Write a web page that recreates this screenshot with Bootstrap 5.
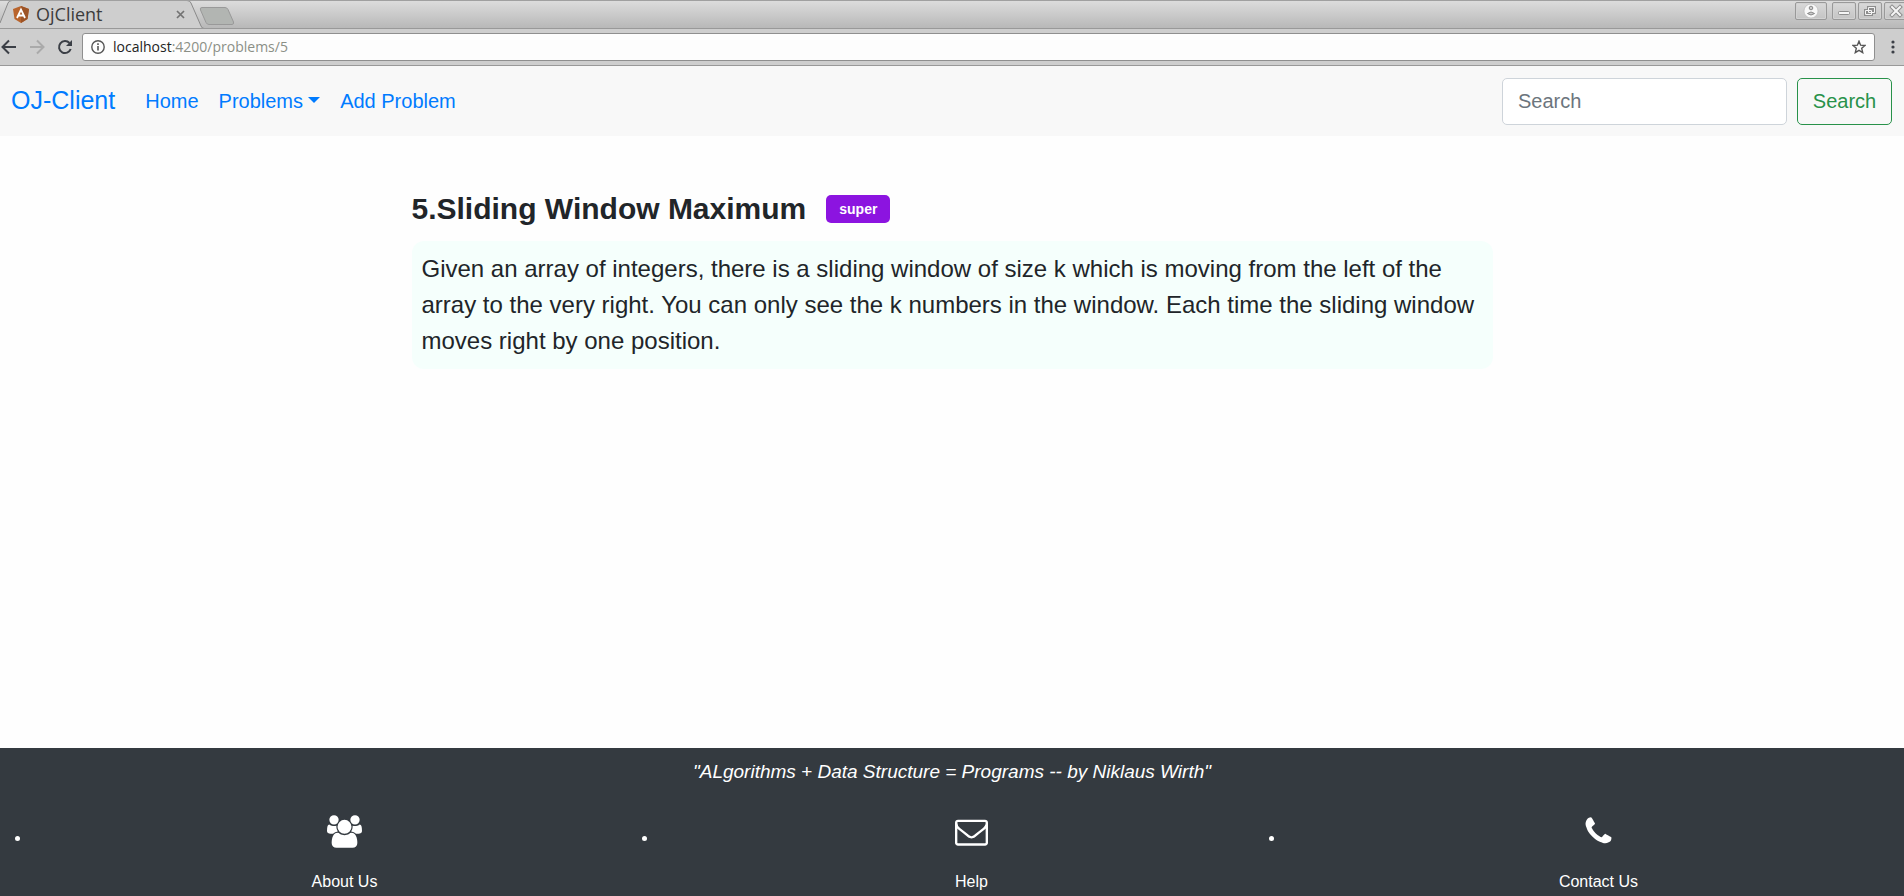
<!DOCTYPE html>
<html lang="en">
<head>
<meta charset="utf-8">
<meta name="viewport" content="width=device-width, initial-scale=1">
<title>OjClient</title>
<link href="https://cdn.jsdelivr.net/npm/bootstrap@5.3.0/dist/css/bootstrap.min.css" rel="stylesheet">
<style>
  body { font-family: "Liberation Sans", Arial, sans-serif; background: #fefefe; color: #212529; }
  .browser { font-family: "Open Sans", "Noto Sans", sans-serif; }
  .browser button { background: none; border: 0; padding: 0; line-height: 0; }
  .tab-strip { height: 29px; background: linear-gradient(#dcdcdc, #b8b8b8); border-top: 1px solid #a0a0a0; border-bottom: 1px solid #999; overflow: hidden; }
  .tab-shape { width: 202px; height: 29px; margin-top: -1px; position: relative; }
  .tab-shape > svg { position: absolute; left: 0; top: 0; }
  .tab-label { position: relative; height: 28px; padding-left: 13px; padding-right: 17px; }
  .tab-label a { font-size: 18px; line-height: 28px; color: #3c3c3c; margin-left: 7px; }
  .new-tab { margin-left: -3px; }
  .win-group { gap: 2px; margin: 1px -4px 0 auto; }
  .browser .win-btn { height: 18px; width: 24px; border: 1px solid #999; border-radius: 2px; box-shadow: inset 0 0 0 1px #d2d2d2; }
  .browser .win-btn.profile { width: 32px; margin-right: 3px; }
  .tool-row { height: 37px; background: #cecece; border-bottom: 1px solid #999; }
  .address { height: 28px; border: 1px solid #8f8f8f; border-radius: 3px; background: #fdfdfd; font-size: 14px; line-height: 26px; color: #8b8f86; }
  .address a { color: inherit; }
  .address b { font-weight: 400; color: #222; }
  .tool-row .menu-btn { padding: 0 9px 0 16px; }
  .site-nav { background: #f8f8f8; min-height: 70px; --bs-navbar-padding-y: 0; font-size: 20px; }
  .site-nav .container-fluid { padding-left: 11px; }
  .site-nav a { color: #007bff; }
  .site-nav .navbar-brand { font-size: 25px; margin-right: 20px; }
  .site-nav .navbar-nav .nav-link { padding: 8px 10px; color: #007bff; }
  .site-nav form { gap: 10px; }
  .site-nav .form-control { width: 285px; height: 47px; font-size: 20px; padding: 6px 15px; border-color: #ced4da; border-radius: 5px; background: #fff; }
  .site-nav .form-control::placeholder { color: #6c757d; }
  .site-nav .btn { width: 95px; height: 47px; font-size: 20px; padding: 6px 0; color: #28924a; border-color: #28924a; border-radius: 5px; }
  .problem { max-width: 1081px; padding: 54px 0 0; }
  .title-row { gap: 20px; margin-bottom: 13px; }
  .problem h1 { font-size: 30px; line-height: 38px; }
  .level { background: #8c14e0; font-size: 14px; line-height: 14px; padding: 7px 13px; border-radius: 5px; }
  .statement { background: #f5fffc; border-radius: 12px; padding: 10px; font-size: 24px; line-height: 36px; }
  .site-footer { background: #343a40; color: #fff; min-height: 148px; overflow: hidden; }
  .site-footer .quote { font-size: 19px; line-height: 28px; padding-top: 10px; }
  .site-footer ul { margin: 0 -8px 0 31px; padding: 29px 0 0; }
  .site-footer li { text-align: center; font-size: 16px; line-height: 24px; }
  .site-footer li a { color: #fff; }
  .site-footer li svg { vertical-align: -5px; }
  .site-footer li span { display: block; padding-top: 20px; }
</style>
</head>
<body class="min-vh-100 d-flex flex-column">
<div class="browser">
  <div class="tab-strip d-flex align-items-start">
    <div class="tab-shape">
      <svg width="204" height="29"><path d="M-2 28 L8 3 Q9 .5 12 .5 H187 Q190 .5 191 3 L201 26 Q202 28.500 204 28.500 V30 H-2Z" fill="#cecece"/><path d="M0 23 L8 3 Q9 .5 12 .5 H187 Q190 .5 191 3 L201 26 Q202 28.500 204 28.500" fill="none" stroke="#8a8a8a"/></svg>
      <div class="tab-label d-flex align-items-center">
        <svg width="16" height="17" viewBox="0 0 16 17"><path d="M8 0 16 3 14.500 13 8 17 1.500 13 0 3Z" fill="#b9642c"/><path d="M8 0 16 3 14.500 13 8 17Z" fill="#9d5426"/><path d="M4 12 8 3.500 12 12M5.500 9.500H10.500" fill="none" stroke="#fff" stroke-width="1.800"/></svg>
        <a href="#" class="text-decoration-none me-auto">OjClient</a>
        <button type="button" aria-label="Close tab"><svg width="9" height="9"><path d="M1 1 8 8M8 1 1 8" stroke="#737373" stroke-width="1.700"/></svg></button>
      </div>
    </div>
    <button type="button" class="new-tab" aria-label="New tab"><svg width="36" height="26"><path d="M3 6.500H26Q28 6.500 29 8.500L34.500 21Q35 23.500 33 23.500H10Q8 23.500 7 21.500L1.500 9Q.5 6.500 3 6.500Z" fill="#b2b5b2" stroke="#999"/></svg></button>
    <div class="win-group d-flex">
      <button type="button" class="win-btn profile" aria-label="Profile"><svg width="16" height="16" viewBox="0 0 16 16"><circle cx="8" cy="8" r="7" fill="#f8f8f8" stroke="#aaa" stroke-width=".5"/><circle cx="8" cy="5" r="1.800" fill="#ccc" stroke="#888"/><path d="M4.500 10.500Q8 7.500 11.500 10.500 8 13.500 4.500 10.500Z" fill="#ccc" stroke="#888"/></svg></button>
      <button type="button" class="win-btn" aria-label="Minimise"><svg width="16" height="16"><rect x="2.500" y="8.500" width="11" height="3" rx="1" fill="#f5f5f5" stroke="#8d8d8d"/></svg></button>
      <button type="button" class="win-btn" aria-label="Restore"><svg width="16" height="16"><path d="M6.500 4.500h6v5h-6zM3.500 7.500h6v4h-6z" fill="none" stroke="#8d8d8d" stroke-width="3"/><path d="M6.500 4.500h6v5h-6zM3.500 7.500h6v4h-6z" fill="none" stroke="#f5f5f5"/></svg></button>
      <button type="button" class="win-btn" aria-label="Close"><svg width="16" height="16"><path d="M4 4 12 12M12 4 4 12" stroke="#8d8d8d" stroke-width="4" stroke-linecap="square"/><path d="M4 4 12 12M12 4 4 12" stroke="#f5f5f5" stroke-width="2" stroke-linecap="square"/></svg></button>
    </div>
  </div>
  <div class="tool-row d-flex align-items-center">
    <button type="button" aria-label="Back"><svg width="18" height="16"><path d="M16 8H3M9 1.500 2.500 8 9 14.500" fill="none" stroke="#3b3f46" stroke-width="2"/></svg></button>
    <button type="button" class="ms-2 ps-1" aria-label="Forward"><svg width="18" height="16"><path d="M0 8H13M7 1.500 13.500 8 7 14.500" fill="none" stroke="#aaa" stroke-width="2"/></svg></button>
    <button type="button" class="ms-2" aria-label="Reload"><svg width="18" height="16"><path d="M13.500 4A6 6 0 1 0 14.700 10" fill="none" stroke="#3b3f46" stroke-width="2"/><path d="M16 1V7H10Z" fill="#3b3f46"/></svg></button>
    <div class="address flex-grow-1 d-flex align-items-center ms-2 ps-1 pe-2">
      <svg class="ms-1 me-2" width="14" height="14" viewBox="0 0 14 14"><circle cx="7" cy="7" r="6.200" fill="none" stroke="#555" stroke-width="1.400"/><path d="M7 6V10.500M7 3.200V5" stroke="#555" stroke-width="1.600"/></svg>
      <a href="#" class="text-decoration-none me-auto"><b>localhost</b>:4200/problems/5</a>
      <button type="button" aria-label="Bookmark"><svg width="14" height="14" viewBox="0 0 14 14"><path d="M7 1.200 8.600 5.200 13 5.500 9.700 8.300 10.700 12.600 7 10.300 3.300 12.600 4.300 8.300 1 5.500 5.400 5.200Z" fill="none" stroke="#555" stroke-width="1.400"/></svg></button>
    </div>
    <button type="button" class="menu-btn" aria-label="Menu"><svg width="4" height="14"><circle cx="2" cy="2" r="1.600" fill="#3b3f46"/><circle cx="2" cy="7" r="1.600" fill="#3b3f46"/><circle cx="2" cy="12" r="1.600" fill="#3b3f46"/></svg></button>
  </div>
</div>

<nav class="site-nav navbar navbar-expand">
  <div class="container-fluid">
    <a class="navbar-brand" href="#">OJ-Client</a>
    <ul class="navbar-nav me-auto">
      <li class="nav-item"><a class="nav-link" href="#">Home</a></li>
      <li class="nav-item dropdown"><a class="nav-link dropdown-toggle" href="#" role="button" data-bs-toggle="dropdown">Problems</a></li>
      <li class="nav-item"><a class="nav-link" href="#">Add Problem</a></li>
    </ul>
    <form class="d-flex" role="search">
      <input class="form-control" type="search" placeholder="Search" aria-label="Search">
      <button class="btn btn-outline-success" type="button">Search</button>
    </form>
  </div>
</nav>

<main class="problem container flex-grow-1">
  <div class="title-row d-flex align-items-center">
    <h1 class="fw-bold mb-0">5.Sliding Window Maximum</h1>
    <span class="level badge">super</span>
  </div>
  <p class="statement mb-0">Given an array of integers, there is a sliding window of size k which is moving from the left of the array to the very right. You can only see the k numbers in the window. Each time the sliding window moves right by one position.</p>
</main>

<footer class="site-footer">
  <p class="quote fst-italic text-center mb-0">"ALgorithms + Data Structure = Programs -- by Niklaus Wirth"</p>
  <ul class="d-flex">
    <li class="col-4"><a href="#" class="text-decoration-none">
      <svg width="35" height="33" viewBox="0 0 1920 1792" fill="#fff"><path d="M593 896q-162 5-265 128h-134q-82 0-138-40.500t-56-118.500q0-353 124-353 6 0 43.500 21t97.500 42.500 119 21.500q67 0 133-23-5 37-5 66 0 139 81 256zm1071 637q0 120-73 189.500t-194 69.500h-874q-121 0-194-69.500t-73-189.500q0-53 3.500-103.500t14-109 26.500-108.500 43-97.500 62-81 85.500-53.500 111.500-20q10 0 43 21.500t73 48 107 48 135 21.500 135-21.500 107-48 73-48 43-21.500q61 0 111.500 20t85.500 53.500 62 81 43 97.500 26.500 108.500 14 109 3.500 103.500zm-1024-1277q0 106-75 181t-181 75-181-75-75-181 75-181 181-75 181 75 75 181zm704 384q0 159-112.500 271.500t-271.500 112.500-271.500-112.500-112.500-271.500 112.500-271.500 271.500-112.500 271.500 112.500 112.500 271.500zm576 225q0 78-56 118.500t-138 40.500h-134q-103-123-265-128 81-117 81-256 0-29-5-66 66 23 133 23 59 0 119-21.500t97.500-42.500 43.500-21q124 0 124 353zm-128-609q0 106-75 181t-181 75-181-75-75-181 75-181 181-75 181 75 75 181z"/></svg>
      <span>About Us</span></a></li>
    <li class="col-4"><a href="#" class="text-decoration-none">
      <svg width="33" height="33" viewBox="0 0 1792 1792" fill="#fff"><path d="M1664 1504v-768q-32 36-69 66-268 206-426 338-51 43-83 67t-86.500 48.500-102.500 24.500h-2q-48 0-102.500-24.500t-86.500-48.500-83-67q-158-132-426-338-37-30-69-66v768q0 13 9.500 22.500t22.500 9.500h1472q13 0 22.500-9.500t9.500-22.500zm0-1051v-24.500l-.5-13-3-12.500-5.500-9-9-7.500-14-2.500h-1472q-13 0-22.500 9.500t-9.500 22.500q0 168 147 284 193 152 401 317 6 5 35 29.500t46 37.500 44.500 31.500 50.500 27.500 43 9h2q20 0 43-9t50.500-27.500 44.500-31.500 46-37.500 35-29.500q208-165 401-317 54-43 100.500-115.500t46.500-131.500zm128-37v1088q0 66-47 113t-113 47h-1472q-66 0-113-47t-47-113v-1088q0-66 47-113t113-47h1472q66 0 113 47t47 113z"/></svg>
      <span>Help</span></a></li>
    <li class="col-4"><a href="#" class="text-decoration-none">
      <svg width="33" height="33" viewBox="0 0 1792 1792" fill="#fff"><path d="M1600 1240q0 27-10 70.500t-21 68.500q-21 50-122 106-94 51-186 51-27 0-53-3.500t-57.500-12.500-47-14.500-55.500-20.500-49-18q-98-35-175-83-127-79-264-216t-216-264q-48-77-83-175-3-9-18-49t-20.500-55.500-14.500-47-12.500-57.500-3.500-53q0-92 51-186 56-101 106-122 25-11 68.500-21t70.500-10q14 0 21 3 18 6 53 76 11 19 30 54t35 63.500 31 53.500q3 4 17.500 25t21.500 35.500 7 28.500q0 20-28.500 50t-62 55-62 53-28.500 46q0 9 5 22.500t8.500 20.500 14 24 11.500 19q76 137 174 235t235 174q2 1 19 11.500t24 14 20.500 8.500 22.500 5q18 0 46-28.500t53-62 55-62 50-28.500q14 0 28.500 7t35.500 21.500 25 17.500q25 15 53.500 31t63.500 35 54 30q70 35 76 53 3 7 3 21z"/></svg>
      <span>Contact Us</span></a></li>
  </ul>
</footer>
<script src="https://cdn.jsdelivr.net/npm/bootstrap@5.3.0/dist/js/bootstrap.bundle.min.js"></script>
</body>
</html>
